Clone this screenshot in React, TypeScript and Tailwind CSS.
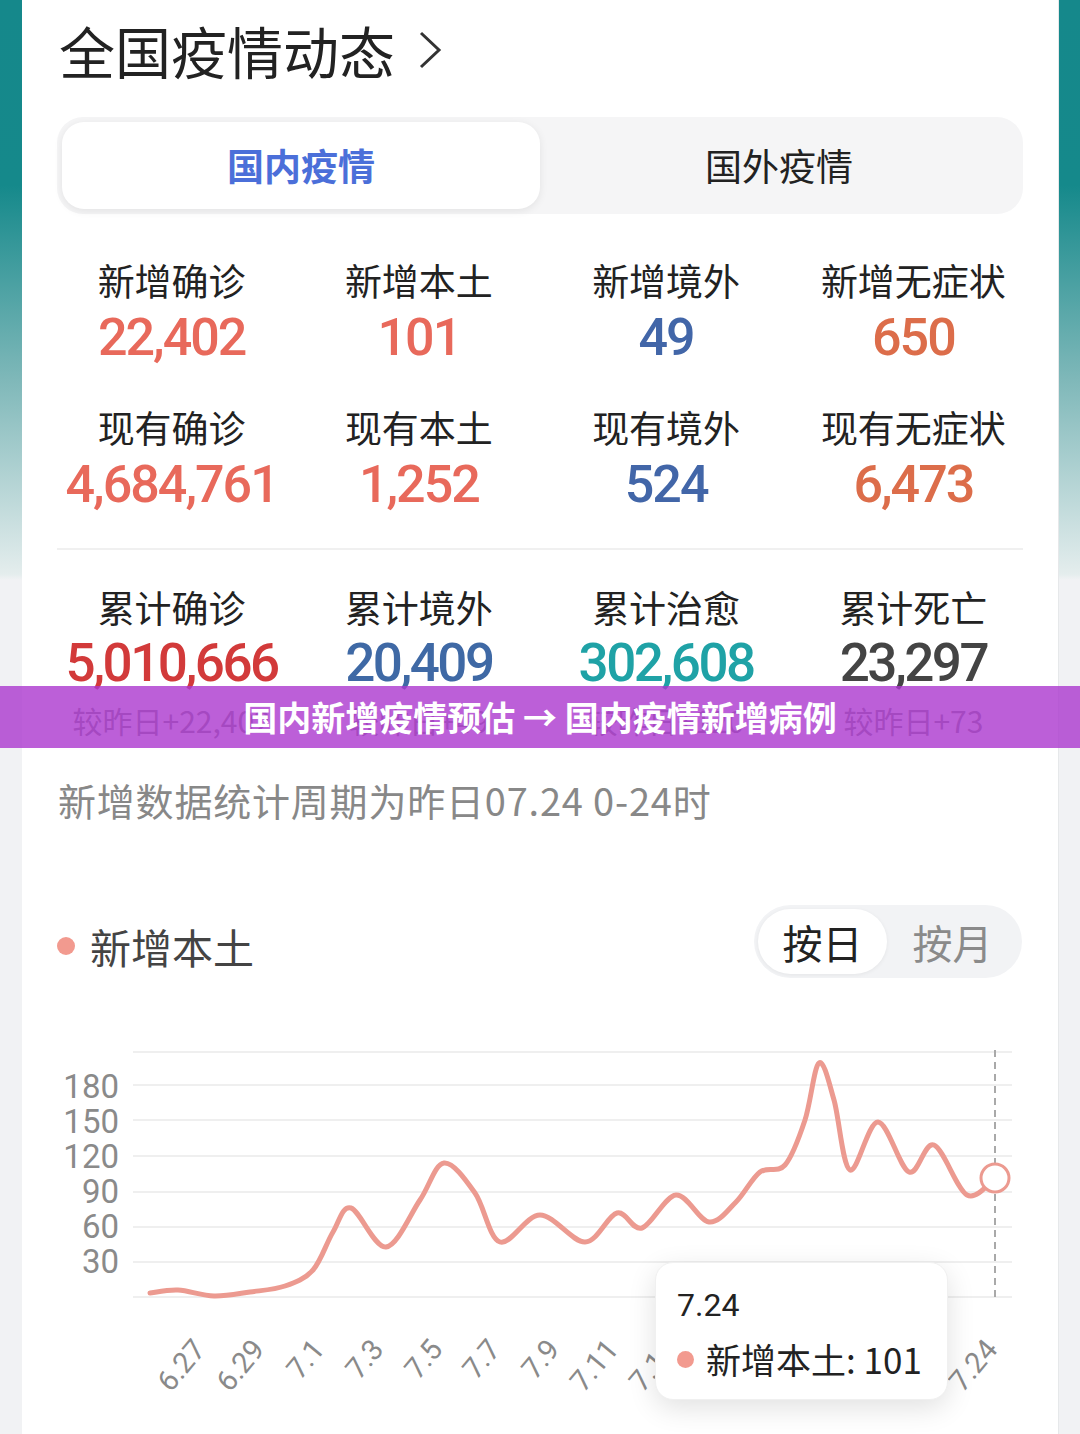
import React from 'react';

const cjk = "font-['Noto_Sans_CJK_SC',sans-serif]";
const num = "font-['Roboto','Noto_Sans_CJK_SC',sans-serif]";

type Stat = { label: string; value: string; color: string };

const rowNew: Stat[] = [
  { label: '新增确诊', value: '22,402', color: 'text-[#e8695b]' },
  { label: '新增本土', value: '101', color: 'text-[#e8695b]' },
  { label: '新增境外', value: '49', color: 'text-[#4266a8]' },
  { label: '新增无症状', value: '650', color: 'text-[#dc6d4a]' },
];

const rowNow: Stat[] = [
  { label: '现有确诊', value: '4,684,761', color: 'text-[#e8695b]' },
  { label: '现有本土', value: '1,252', color: 'text-[#e8695b]' },
  { label: '现有境外', value: '524', color: 'text-[#4266a8]' },
  { label: '现有无症状', value: '6,473', color: 'text-[#dc6d4a]' },
];

const rowTotal: (Stat & { diff: string })[] = [
  { label: '累计确诊', value: '5,010,666', color: 'text-[#d23a3a]', diff: '较昨日+22,402' },
  { label: '累计境外', value: '20,409', color: 'text-[#3f69a5]', diff: '较昨日+49' },
  { label: '累计治愈', value: '302,608', color: 'text-[#1fa2a6]', diff: '较昨日+120' },
  { label: '累计死亡', value: '23,297', color: 'text-[#444444]', diff: '较昨日+73' },
];

function StatCell({ s }: { s: Stat }) {
  return (
    <div className="flex flex-col items-center">
      <div className={`${cjk} h-[40px] text-[37px] leading-[40px] text-[#222]`}>{s.label}</div>
      <div className={`${num} ${s.color} mt-[10px] h-[56px] text-[52px] leading-[56px] font-medium tracking-[-2px]`}>
        {s.value}
      </div>
    </div>
  );
}

const pts: [number, number][] = [
  [150, 1293], [178, 1290], [214, 1296], [250, 1292], [285, 1286], [313, 1270], [333, 1232], [351, 1208],
  [386, 1247], [420, 1200], [444, 1163], [475, 1193], [500, 1242], [540, 1215], [585, 1242], [617, 1213],
  [642, 1228], [676, 1195], [709, 1222], [736, 1202], [760, 1172], [785, 1165], [805, 1120], [819, 1063],
  [834, 1100], [850, 1170], [878, 1122], [909, 1172], [934, 1145], [967, 1195], [995, 1178],
];

function smooth(p: [number, number][]) {
  let d = `M${p[0][0]},${p[0][1]}`;
  for (let i = 0; i < p.length - 1; i++) {
    const p0 = p[i - 1] || p[i];
    const p1 = p[i];
    const p2 = p[i + 1];
    const p3 = p[i + 2] || p2;
    const c1x = p1[0] + (p2[0] - p0[0]) / 6;
    const c1y = p1[1] + (p2[1] - p0[1]) / 6;
    const c2x = p2[0] - (p3[0] - p1[0]) / 6;
    const c2y = p2[1] - (p3[1] - p1[1]) / 6;
    d += ` C${c1x},${c1y} ${c2x},${c2y} ${p2[0]},${p2[1]}`;
  }
  return d;
}

const gridY = [1052, 1085, 1120, 1156, 1192, 1227, 1262, 1297];
const yLabels: [string, number][] = [
  ['180', 1087], ['150', 1122], ['120', 1157], ['90', 1192], ['60', 1227], ['30', 1262],
];
const xLabels: [string, number][] = [
  ['6.27', 207], ['6.29', 266], ['7.1', 326], ['7.3', 385], ['7.5', 444], ['7.7', 502], ['7.9', 561],
  ['7.11', 620], ['7.13', 679], ['7.15', 738], ['7.17', 797], ['7.19', 856], ['7.21', 915], ['7.24', 999],
];

function Chart() {
  return (
    <div className="relative h-[456px] w-[1036px]">
      <svg width="1036" height="456" viewBox="22 978 1036 456" className="block">
        {gridY.map((y) => (
          <line key={y} x1="133" x2="1012" y1={y} y2={y} stroke="#efefef" strokeWidth="2" />
        ))}
        {yLabels.map(([t, y]) => (
          <text key={t} x="119" y={y + 11} textAnchor="end" fontSize="33" fill="#8a8a8a" fontFamily="Roboto, sans-serif">
            {t}
          </text>
        ))}
        <line x1="995" x2="995" y1="1050" y2="1298" stroke="#a9a9a9" strokeWidth="2" strokeDasharray="7 5" />
        <path d={smooth(pts)} fill="none" stroke="#ec9a90" strokeWidth="5" strokeLinecap="round" strokeLinejoin="round" />
        <circle cx="995" cy="1178" r="14" fill="#fff" stroke="#ec9a90" strokeWidth="3" />
        {xLabels.map(([t, x]) => (
          <text
            key={t}
            x={x}
            y={1350}
            textAnchor="end"
            fontSize="29"
            fill="#8a8a8a"
            fontFamily="Roboto, sans-serif"
            transform={`rotate(-50 ${x} 1350)`}
          >
            {t}
          </text>
        ))}
      </svg>

      <div className="absolute left-[633px] top-[284px] flex h-[138px] w-[293px] flex-col rounded-[18px] border border-[#f0f0f0] bg-white pl-[21px] shadow-[0_8px_28px_rgba(0,0,0,0.12)]">
        <div className={`${num} mt-[22px] h-[40px] text-[32px] leading-[40px] text-[#222]`}>7.24</div>
        <div className="mt-[12px] flex items-center">
          <span className="h-[17px] w-[17px] rounded-full bg-[#f29a8f]" />
          <span className={`${cjk} ml-[12px] text-[35px] leading-[44px] text-[#222]`}>新增本土: 101</span>
        </div>
      </div>
    </div>
  );
}

export default function App() {
  const strip =
    'w-[22px] shrink-0 bg-[linear-gradient(180deg,#15888b_0px,#15898b_185px,#7fb8b9_380px,#e4eded_574px,#f1f2f4_580px,#f1f2f4_100%)]';
  return (
    <div className="relative flex h-[1434px] w-[1080px] overflow-hidden bg-white">
      <div className={strip} />

      <div className="flex w-[1036px] flex-col bg-white">
        {/* header */}
        <div className="flex h-[100px] items-center pl-[37px]">
          <span className={`${cjk} text-[56px] leading-none text-[#222]`}>全国疫情动态</span>
          <svg width="26" height="40" viewBox="0 0 26 40" className="ml-[22px]">
            <polyline points="4,3 22,20 4,37" fill="none" stroke="#333" strokeWidth="3" />
          </svg>
        </div>

        {/* tabs */}
        <div className="mx-[35px] mt-[18px] flex h-[97px] rounded-[26px] bg-[#f5f5f6] p-[5px]">
          <div className="flex w-[478px] items-center justify-center rounded-[22px] bg-white shadow-[0_2px_8px_rgba(0,0,0,0.08)]">
            <span className={`${cjk} text-[37px] font-bold text-[#4b6fd9]`}>国内疫情</span>
          </div>
          <div className="flex flex-1 items-center justify-center">
            <span className={`${cjk} text-[37px] text-[#222]`}>国外疫情</span>
          </div>
        </div>

        {/* stats */}
        <div className="ml-[26px] mt-[46px] grid w-[989px] grid-cols-4">
          {rowNew.map((s) => (
            <StatCell key={s.label} s={s} />
          ))}
        </div>
        <div className="ml-[26px] mt-[41px] grid w-[989px] grid-cols-4">
          {rowNow.map((s) => (
            <StatCell key={s.label} s={s} />
          ))}
        </div>

        <div className="mx-[35px] mt-[35px] h-[2px] bg-[#f0f0f0]" />

        <div className="ml-[26px] mt-[37px] grid w-[989px] grid-cols-4">
          {rowTotal.map((s) => (
            <div key={s.label} className="flex flex-col items-center">
              <div className={`${cjk} h-[40px] text-[37px] leading-[40px] text-[#222]`}>{s.label}</div>
              <div className={`${num} ${s.color} mt-[8px] h-[56px] text-[53px] leading-[56px] font-medium tracking-[-2.5px]`}>
                {s.value}
              </div>
              <div className={`${cjk} mt-[12px] h-[34px] text-[30px] leading-[34px] text-[#8a8a8a]`}>{s.diff}</div>
            </div>
          ))}
        </div>

        <div className={`${cjk} ml-[36px] mt-[41px] h-[44px] text-[38px] leading-[44px] tracking-[0.8px] text-[#888]`}>
          新增数据统计周期为昨日07.24 0-24时
        </div>

        {/* chart header */}
        <div className="mt-[83px] flex h-[73px] items-center justify-between pl-[35px] pr-[36px]">
          <div className="mt-[9px] flex items-center">
            <span className="h-[18px] w-[18px] rounded-full bg-[#f29a8f]" />
            <span className={`${cjk} ml-[15px] text-[41px] leading-none text-[#444]`}>新增本土</span>
          </div>
          <div className="flex h-[73px] w-[268px] rounded-full bg-[#f2f3f5] p-[4px]">
            <div className="flex w-[129px] items-center justify-center rounded-full bg-white shadow-[0_1px_4px_rgba(0,0,0,0.06)]">
              <span className={`${cjk} text-[40px] text-[#222]`}>按日</span>
            </div>
            <div className="flex flex-1 items-center justify-center">
              <span className={`${cjk} text-[40px] text-[#8a8a8a]`}>按月</span>
            </div>
          </div>
        </div>

        <Chart />
      </div>

      <div className={`${strip} border-l border-[#e6e8ea]`} />

      {/* overlay banner */}
      <div className="absolute left-0 top-[686px] flex h-[62px] w-full items-center justify-center bg-[#ab37ce]/80">
        <span className={`${cjk} text-[34px] font-bold leading-none text-white`}>国内新增疫情预估 → 国内疫情新增病例</span>
      </div>
    </div>
  );
}
